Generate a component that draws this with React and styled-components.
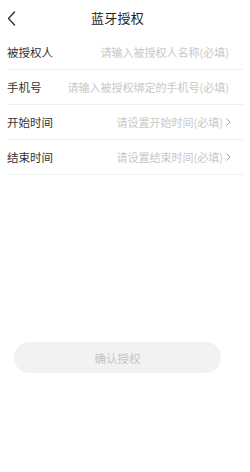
import React from 'react';
import styled, { createGlobalStyle } from 'styled-components';

const GlobalStyle = createGlobalStyle`
    html, body {
        margin: 0;
        padding: 0;
        background: #fff;
    }
    body {
        font-family: "Noto Sans CJK SC", "Noto Sans", sans-serif;
    }
`;

const fields = [
    { label: '被授权人', placeholder: '请输入被授权人名称(必填)' },
    { label: '手机号', placeholder: '请输入被授权绑定的手机号(必填)' },
    { label: '开始时间', placeholder: '请设置开始时间(必填)', arrow: true },
    { label: '结束时间', placeholder: '请设置结束时间(必填)', arrow: true },
];

function BackIcon() {
    return (
        <svg width="9" height="15" viewBox="0 0 9 15">
            <path d="M7.5 1 L1.5 7.5 L7.5 14" fill="none" stroke="#333" strokeWidth="1.4" strokeLinecap="round" strokeLinejoin="round" />
        </svg>
    );
}

function ArrowIcon() {
    return (
        <svg width="5" height="8" viewBox="0 0 5 8">
            <path d="M0.8 0.8 L4 4 L0.8 7.2" fill="none" stroke="#9a9a9a" strokeWidth="0.9" strokeLinecap="round" strokeLinejoin="round" />
        </svg>
    );
}

export default function App() {
    return (
        <Page>
            <GlobalStyle />
            <Header>
                <BackBtn><BackIcon /></BackBtn>
                <Title>蓝牙授权</Title>
                <span />
            </Header>
            <List>
                {fields.map((f) => (
                    <Row key={f.label} $arrow={f.arrow}>
                        <Label>{f.label}</Label>
                        <Value>
                            <Placeholder>{f.placeholder}</Placeholder>
                            {f.arrow && <ArrowWrap><ArrowIcon /></ArrowWrap>}
                        </Value>
                    </Row>
                ))}
            </List>
            <Submit>确认授权</Submit>
        </Page>
    );
}

const Page = styled.div`
    width: 250px;
    height: 472px;
    display: flex;
    flex-direction: column;
    background: #fff;
`;

const Header = styled.div`
    height: 35px;
    display: grid;
    grid-template-columns: 1fr auto 1fr;
    align-items: center;
    padding: 0 22px 0 7px;
`;

const BackBtn = styled.div`
    display: flex;
    align-items: center;
    padding-top: 1px;
`;

const Title = styled.div`
    font-size: 13px;
    color: #222;
    letter-spacing: 0.3px;
`;

const List = styled.div`
    display: flex;
    flex-direction: column;
    padding-left: 7px;
    padding-right: 7px;
`;

const Row = styled.div`
    height: 35px;
    display: flex;
    align-items: center;
    justify-content: space-between;
    border-bottom: 1px solid #f0f0f0;
    box-sizing: border-box;
    padding-right: ${(p) => (p.$arrow ? '12px' : '14px')};
`;

const Label = styled.div`
    font-size: 11.5px;
    color: #333;
`;

const Value = styled.div`
    display: flex;
    align-items: center;
    gap: 3px;
`;

const Placeholder = styled.span`
    font-size: 11px;
    color: #c8c8c8;
`;

const ArrowWrap = styled.span`
    display: flex;
    align-items: center;
`;

const Submit = styled.div`
    margin: 167px 0 0 14px;
    width: 207px;
    height: 31px;
    border-radius: 16px;
    background: #f2f2f2;
    color: #c4c4c4;
    font-size: 11.5px;
    display: flex;
    align-items: center;
    justify-content: center;
`;
